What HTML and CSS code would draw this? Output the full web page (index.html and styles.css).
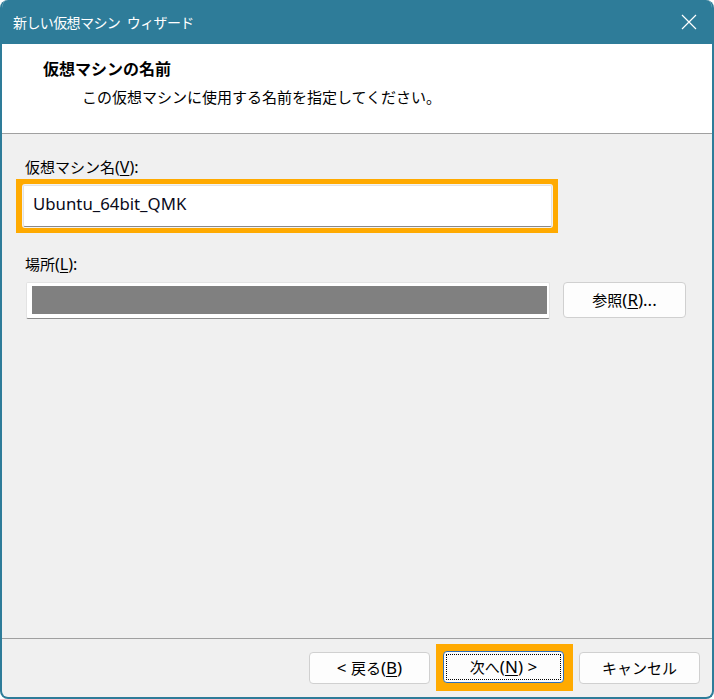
FILE: index.html
```html
<!DOCTYPE html>
<html lang="ja">
<head>
<meta charset="utf-8">
<title>新しい仮想マシン ウィザード</title>
<link rel="stylesheet" href="styles.css">
</head>
<body>
<div class="window">
  <div class="titlebar">
    <span class="title-text">新しい仮想マシン ウィザード</span>
    <svg class="close" width="16" height="16" viewBox="0 0 16 16"><path d="M1 1 L15 15 M15 1 L1 15" stroke="#ffffff" stroke-width="1.2" fill="none"/></svg>
  </div>
  <div class="header">
    <div class="header-title">仮想マシンの名前</div>
    <div class="header-sub">この仮想マシンに使用する名前を指定してください。</div>
  </div>
  <div class="content">
    <div class="label first">仮想マシン名<span class="lat">(<u>V</u>):</span></div>
    <div class="highlight name-hl">
      <div class="textbox">Ubuntu_64bit_QMK</div>
    </div>
    <div class="label second">場所<span class="lat">(<u>L</u>):</span></div>
    <div class="loc-row">
      <div class="textbox loc"><div class="redact"></div></div>
      <div class="btn browse">参照<span class="lat">(<u>R</u>)...</span></div>
    </div>
  </div>
  <div class="footer">
    <div class="btn"><span class="lat">&lt;&nbsp;</span>戻る<span class="lat">(<u>B</u>)</span></div>
    <div class="highlight next-hl">
      <div class="btn default"><span class="focus">次へ<span class="lat">(<u>N</u>)&nbsp;&gt;</span></span></div>
    </div>
    <div class="btn">キャンセル</div>
  </div>
</div>
</body>
</html>
```

FILE: styles.css
```css
* { box-sizing: border-box; }
html, body { margin: 0; padding: 0; background: #ffffff; }
body {
  width: 714px;
  height: 699px;
  font-family: "Noto Sans CJK JP", "Noto Sans", sans-serif;
  font-size: 15px;
  color: #000000;
}
.window {
  width: 714px;
  height: 699px;
  border: 2px solid #2e7c99;
  border-top: 0;
  border-radius: 8px;
  overflow: hidden;
  background: #f0f0f0;
  display: flex;
  flex-direction: column;
}
.titlebar {
  height: 44px;
  background: #2e7c99;
  display: flex;
  align-items: center;
  justify-content: space-between;
  padding: 0 15px 0 11px;
  flex: none;
}
.title-text {
  color: #ffffff;
  font-size: 14px;
  line-height: 20px;
  letter-spacing: -0.6px;
  word-spacing: 4px;
}
.close { display: block; }
.header {
  height: 90px;
  background: #ffffff;
  border-bottom: 1px solid #a0a0a0;
  padding: 13px 0 0 41px;
  flex: none;
}
.header-title {
  font-weight: bold;
  font-size: 16px;
  line-height: 22px;
}
.header-sub {
  margin-top: 8px;
  padding-left: 39px;
  line-height: 20px;
}
.content {
  flex: 1;
  padding: 0;
}
.label {
  line-height: 20px;
  padding-left: 23px;
  color: #000;
}
.lat {
  font-family: "Noto Sans", sans-serif;
  font-size: 16px;
}
.label.first { margin-top: 23px; }
.label.second { margin-top: 21px; }
u { text-decoration-thickness: 1px; text-underline-offset: 2px; }
.highlight {
  background: #ffaa00;
}
.name-hl {
  margin: 2px 0 0 14px;
  width: 542px;
  height: 54px;
  padding: 6px 6px 6px 7px;
}
.textbox {
  background: #ffffff;
  border: 1px solid #e3e3e3;
  border-bottom: 1px solid #8a8a8a;
  border-radius: 2px;
}
.name-hl .textbox {
  height: 42px;
  padding: 0 0 0 9px;
  display: flex;
  align-items: center;
  padding-bottom: 6px;
  font-family: "Noto Sans", sans-serif;
  font-size: 16.8px;
  color: #0a0a1a;
  box-shadow: 0 0 0 1px #f2f2f2;
}
.loc-row {
  display: flex;
  margin: 8px 0 0 24px;
  gap: 13px;
  align-items: flex-start;
}
.textbox.loc {
  width: 524px;
  height: 37px;
  padding: 3px 2px 4px 5px;
}
.redact {
  width: 100%;
  height: 100%;
  background: #808080;
}
.btn {
  width: 121px;
  height: 32px;
  background: #fdfdfd;
  border: 1px solid #d0d0d0;
  border-radius: 4px;
  display: flex;
  align-items: center;
  justify-content: center;
  line-height: 20px;
  flex: none;
}
.btn .lat { font-size: 17px; }
.btn.browse {
  width: 123px;
  height: 36px;
}
.footer {
  flex: none;
  height: 59px;
  border-top: 1px solid #a0a0a0;
  display: flex;
  justify-content: flex-end;
  align-items: center;
  gap: 6px;
  padding: 0 12px 1px 0;
}
.next-hl {
  width: 137px;
  height: 47px;
  padding: 7px 7px 8px 7px;
}
.btn.default {
  border: 1px solid #2f6fb8;
  padding: 2px;
}
.focus {
  width: 100%;
  height: 100%;
  border: 1px dotted #000000;
  display: flex;
  align-items: center;
  justify-content: center;
}
```
